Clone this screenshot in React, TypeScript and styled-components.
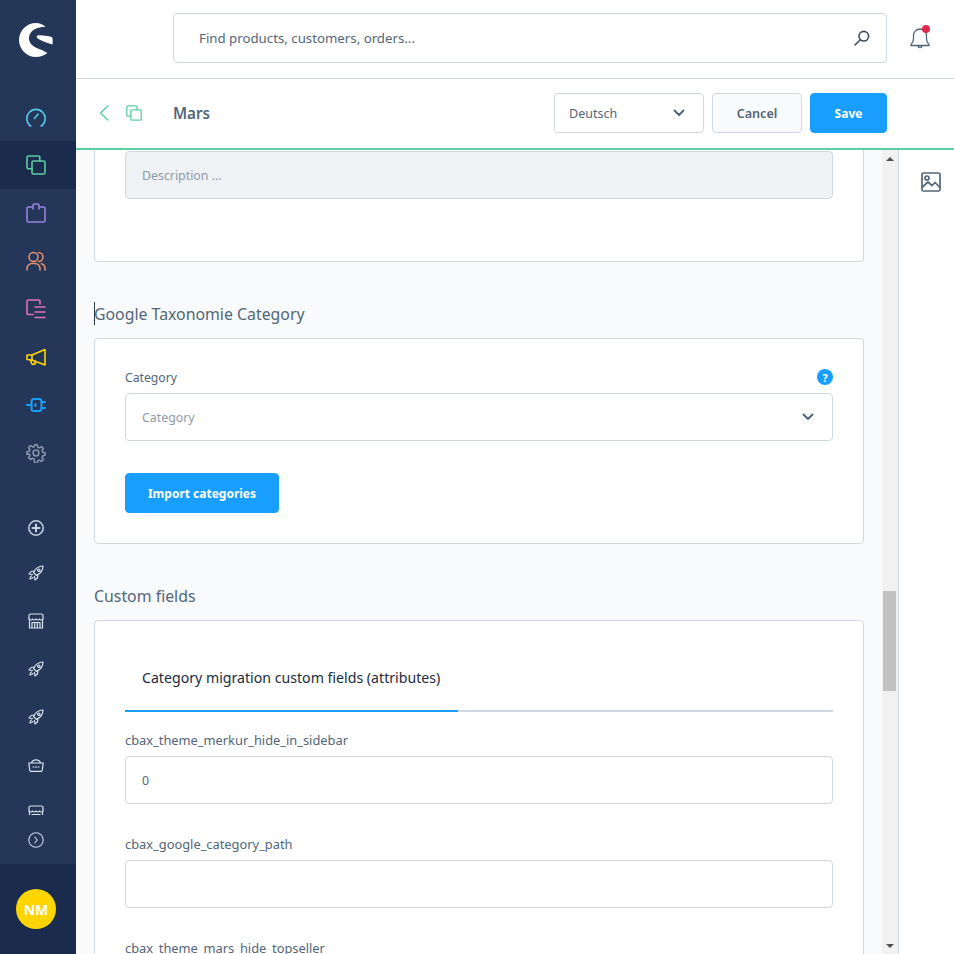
import React from "react";
import styled, { createGlobalStyle } from "styled-components";

const GlobalStyle = createGlobalStyle`
  html, body {
    margin: 0;
    height: 100%;
    overflow: hidden;
    background: #fff;
    font-family: "Noto Sans", "Open Sans", sans-serif;
    color: #52667a;
  }
  * {
    box-sizing: border-box;
  }
`;

const green = "#5bcea1";

const Shell = styled.div`
  display: flex;
  width: 954px;
  height: 954px;
  overflow: hidden;
`;

const Sidebar = styled.nav`
  width: 76px;
  flex: none;
  display: flex;
  flex-direction: column;
  background: #243758;
`;

const LogoBox = styled.div`
  height: 93px;
  display: flex;
  align-items: center;
  justify-content: center;
  padding: 0 4px 13px 0;
`;

const NavItem = styled.div<{ $active?: boolean; $height?: number }>`
  height: ${(p) => p.$height ?? 48}px;
  flex: none;
  display: flex;
  align-items: center;
  justify-content: center;
  padding-right: 4px;
  overflow: hidden;
  background: ${(p) => (p.$active ? "#1a2b4d" : "transparent")};
`;

const ClippedNavItem = styled(NavItem)`
  align-items: flex-start;
  padding-top: 16px;
`;

const NavSpacer = styled.div<{ $h: number }>`
  height: ${(p) => p.$h}px;
  flex: none;
`;

const SideFooter = styled.div`
  height: 90px;
  margin-top: auto;
  display: flex;
  align-items: center;
  justify-content: center;
  padding-right: 4px;
  background: #1a2b4d;
`;

const Avatar = styled.div`
  width: 40px;
  height: 40px;
  border-radius: 50%;
  background: #ffd500;
  color: #fff;
  font-size: 14px;
  font-weight: 700;
  display: flex;
  align-items: center;
  justify-content: center;
`;

const Workspace = styled.div`
  flex: 1;
  min-width: 0;
  display: flex;
  flex-direction: column;
`;

const SearchBar = styled.header`
  height: 79px;
  flex: none;
  display: flex;
  align-items: center;
  padding: 0 19px 3px 97px;
  border-bottom: 1px solid #d1d9e0;
  background: #fff;
`;

const SearchField = styled.div`
  width: 714px;
  height: 50px;
  display: flex;
  align-items: center;
  justify-content: space-between;
  padding: 0 16px 0 25px;
  background: #fff;
  border: 1px solid #d1d9e0;
  border-radius: 4px;
  font-size: 13.26px;
  color: #52667a;
`;

const Bell = styled.div`
  position: relative;
  margin-left: 22px;
  display: flex;
`;

const BellDot = styled.span`
  position: absolute;
  top: -2px;
  right: 1px;
  width: 8px;
  height: 8px;
  border-radius: 50%;
  background: #de294c;
`;

const SmartBar = styled.div`
  height: 71px;
  flex: none;
  display: flex;
  align-items: center;
  padding: 0 67px 2px 23px;
  background: #fff;
  border-bottom: 2px solid ${green};
`;

const Crumbs = styled.div`
  display: flex;
  align-items: center;
  gap: 17px;
  width: 74px;
`;

const PageTitle = styled.h1`
  margin: 0;
  font-size: 15.2px;
  font-weight: 600;
  color: #52667a;
  flex: 1;
`;

const LangSelect = styled.div`
  width: 150px;
  height: 40px;
  display: flex;
  align-items: center;
  justify-content: space-between;
  padding: 1px 18px 0 14px;
  border: 1px solid #d1d9e0;
  border-radius: 4px;
  font-size: 12.5px;
  color: #52667a;
`;

const Button = styled.button<{ $primary?: boolean; $width: number }>`
  width: ${(p) => p.$width}px;
  height: 40px;
  padding: 1px 0 0;
  border-radius: 4px;
  border: 1px solid ${(p) => (p.$primary ? "#189eff" : "#d1d9e0")};
  background: ${(p) => (p.$primary ? "#189eff" : "#f9fafb")};
  color: ${(p) => (p.$primary ? "#fff" : "#52667a")};
  font-family: inherit;
  font-size: ${(p) => (p.$primary ? "12px" : "12.6px")};
  font-weight: ${(p) => (p.$primary ? 700 : 600)};
`;

const CancelButton = styled(Button)`
  margin: 0 8px;
`;

const Body = styled.div`
  flex: 1;
  min-height: 0;
  display: flex;
`;

const Content = styled.main`
  width: 806px;
  flex: none;
  overflow: hidden;
  background: #f9fafb;
  padding: 0 18px;
`;

const Card = styled.section<{ $height?: number }>`
  width: 770px;
  height: ${(p) => (p.$height ? `${p.$height}px` : "auto")};
  background: #fff;
  border: 1px solid #d1d9e0;
  border-radius: 4px;
  padding: 0 30px;
`;

const ClippedCard = styled(Card)`
  margin-top: -30px;
  padding-top: 30px;
`;

const CategoryCard = styled(Card)`
  padding-top: 30px;
`;

const CardTitle = styled.h2`
  position: relative;
  margin: 0;
  height: 76px;
  display: flex;
  align-items: center;
  padding-top: 27px;
  font-size: 15.85px;
  font-weight: 400;
  color: #52667a;
`;

const Caret = styled.span`
  position: absolute;
  left: 0;
  top: 40px;
  width: 1px;
  height: 23px;
  background: #2b3a4a;
`;

const FieldHead = styled.div`
  display: flex;
  align-items: center;
  justify-content: space-between;
  height: 16px;
  font-size: 12.2px;
  color: #52667a;
`;

const CustomLabel = styled(FieldHead)`
  font-size: 12.85px;
`;

const Input = styled.div<{ $disabled?: boolean; $muted?: boolean }>`
  height: 48px;
  margin-top: 8px;
  display: flex;
  align-items: center;
  justify-content: space-between;
  padding: 0 18px 0 16px;
  border: 1px solid #d1d9e0;
  border-radius: 4px;
  background: ${(p) => (p.$disabled ? "#eff1f4" : "#fff")};
  font-size: 12.35px;
  color: ${(p) => (p.$muted ? "#8d9cab" : "#52667a")};
`;

const DescriptionInput = styled(Input)`
  margin-top: 0;
`;

const HelpDot = styled.span`
  width: 16px;
  height: 16px;
  border-radius: 50%;
  background: #189eff;
  color: #fff;
  font-size: 11px;
  font-weight: 700;
  display: flex;
  align-items: center;
  justify-content: center;
`;

const ImportButton = styled(Button)`
  display: block;
  margin-top: 32px;
`;

const Tabs = styled.div`
  display: flex;
  height: 91px;
  border-bottom: 2px solid #d1d9e0;
`;

const Tab = styled.div`
  width: 333px;
  height: 91px;
  display: flex;
  align-items: center;
  padding: 24px 0 0 17px;
  border-bottom: 2px solid #189eff;
  font-size: 14.15px;
  color: #1a2b3c;
`;

const CustomField = styled.div<{ $gap: number }>`
  margin-top: ${(p) => p.$gap}px;
`;

const ScrollBar = styled.div`
  width: 17px;
  flex: none;
  display: flex;
  flex-direction: column;
  background: #f1f1f1;
  border-right: 1px solid #d1d9e0;
`;

const ScrollArrow = styled.div<{ $down?: boolean }>`
  height: 17px;
  flex: none;
  display: flex;
  align-items: center;
  justify-content: center;
  padding-right: 1px;
  margin-top: ${(p) => (p.$down ? "auto" : "0")};
  &::before {
    content: "";
    border-left: 4px solid transparent;
    border-right: 4px solid transparent;
    ${(p) => (p.$down ? "border-top: 4px solid #505050;" : "border-bottom: 4px solid #505050;")}
  }
`;

const ScrollThumb = styled.div`
  width: 13px;
  height: 100px;
  margin: 424px 0 0 1px;
  background: #c1c1c1;
`;

const RightBar = styled.aside`
  flex: 1;
  display: flex;
  justify-content: center;
  padding: 22px 0 0 9px;
  background: #fff;
`;

const Line = {
  fill: "none",
  stroke: "currentColor",
  strokeWidth: 2,
  strokeLinecap: "round" as const,
  strokeLinejoin: "round" as const,
};

const Thin = { ...Line, strokeWidth: 1.5 };

const Logo = () => (
  <svg width="34" height="34" viewBox="0 0 34 34">
    <path
      fill="#fff"
      d="M17 0C20.5 0 24 1.5 26.5 4C22 3.5 13 5 10.5 12C8 19 14 24 20 26C23 27 26 28.5 28.5 30C25 32.5 21 34 17 34C7.6 34 0 26.4 0 17S7.6 0 17 0Z"
    />
    <path
      fill="#fff"
      d="M18.5 12.5C23 12 28 13 33 14C34 16 33.8 19 33.4 21.5C28 20 23 18 19.5 16C17.5 15 17 13 18.5 12.5Z"
    />
  </svg>
);

const Gauge = () => (
  <svg width="20" height="20" viewBox="0 0 20 20" {...Line} color="#57c8e8" strokeWidth={1.6}>
    <path d="M4 18.5A9.2 9.2 0 1 1 16 18.5" />
    <path d="M3.5 18.8h1.5M15 18.8h1.5" />
    <path d="M8.5 11.5l3.5-4.5" />
  </svg>
);

const Copies = ({ color, size = 20 }: { color: string; size?: number }) => (
  <svg width={size} height={size} viewBox="0 0 20 20" {...Line} color={color} strokeWidth={1.6}>
    <path d="M6 13.8H2.5A1.5 1.5 0 0 1 1 12.3V2.5A1.5 1.5 0 0 1 2.5 1h9.8a1.5 1.5 0 0 1 1.5 1.5V6" />
    <rect x="6" y="6" width="13" height="13" rx="1.5" />
  </svg>
);

const Bag = () => (
  <svg width="20" height="20" viewBox="0 0 20 20" {...Line} color="#9a82e0" strokeWidth={1.6}>
    <path d="M6 4H2.5A1.5 1.5 0 0 0 1 5.5v12A1.5 1.5 0 0 0 2.5 19h15a1.5 1.5 0 0 0 1.5-1.5v-12A1.5 1.5 0 0 0 17.5 4H14" />
    <path d="M7 6V2.5A1.5 1.5 0 0 1 8.5 1h3A1.5 1.5 0 0 1 13 2.5V6" />
  </svg>
);

const Users = () => (
  <svg width="20" height="20" viewBox="0 0 20 20" {...Line} color="#e8906f" strokeWidth={1.5}>
    <circle cx="7.5" cy="6" r="4.5" />
    <path d="M1 19v-1.5a5 5 0 0 1 5-5h3a5 5 0 0 1 5 5V19" />
    <path d="M12.5 1.5a4.5 4.5 0 0 1 0 9M15.5 12.8A5 5 0 0 1 19 17.5V19" />
  </svg>
);

const Pages = () => (
  <svg width="20" height="20" viewBox="0 0 20 20" {...Line} color="#e070c0" strokeWidth={1.6}>
    <path d="M7 15.5H2.5A1.5 1.5 0 0 1 1 14V2.5A1.5 1.5 0 0 1 2.5 1h10A1.5 1.5 0 0 1 14 2.5V5" />
    <path d="M9 8h10M9 13h10M9 18.5h10" />
  </svg>
);

const Megaphone = () => (
  <svg width="20" height="20" viewBox="0 0 20 20" {...Line} color="#ffd500" strokeWidth={1.6}>
    <path d="M1 8v4.5l5 .5 13 5V2.5L6 8z" />
    <path d="M6 8v5M4.5 13l1 3a2 2 0 0 0 2.5 1.2l1.5-.6-1-2.4" />
  </svg>
);

const Plug = () => (
  <svg width="20" height="20" viewBox="0 0 20 20" {...Line} color="#189eff" strokeWidth={2}>
    <rect x="5.5" y="4" width="10" height="12" rx="2.5" />
    <path d="M1 10h4.5M15.5 7H19M15.5 13H19M9.5 9v2" />
  </svg>
);

const Gear = () => (
  <svg width="20" height="20" viewBox="-1 -1 22 22" {...Line} color="#8a97a8" strokeWidth={1.7}>
    <circle cx="10" cy="10" r="3.2" />
    <path d="M8.5 1h3l.5 2.6 1.9.8 2.2-1.5 2.100 2.100-1.500 2.200.8 1.900 2.500.5v3l-2.500.5-.8 1.900 1.500 2.200-2.100 2.100-2.200-1.500-1.900.8-.5 2.400h-3L8 16.500l-1.900-.8-2.200 1.500-2.100-2.100 1.500-2.200-.8-1.900L0 11.500v-3l2.500-.5.8-1.900-1.500-2.200 2.100-2.100 2.200 1.500L8 3z" />
  </svg>
);

const PlusCircle = () => (
  <svg width="16" height="16" viewBox="0 0 16 16" {...Thin} color="#c9d4e3">
    <circle cx="8" cy="8" r="7.2" />
    <path d="M8 4.5v7M4.5 8h7" strokeWidth={2} />
  </svg>
);

const Rocket = () => (
  <svg width="16" height="16" viewBox="0 0 16 16" {...Thin} strokeWidth={1.2} color="#dbe4ee">
    <path d="M5.5 7.500C7.5 3.500 10.5 1 15 1c0 4.500-2.500 7.500-6.500 9.500z" />
    <path d="M6.500 6 3 6.500 1 9l3.500.5M10 9.500 9.500 13 7 15l-.5-3.500" />
    <circle cx="10.800" cy="5.200" r="1.200" />
    <path d="M3.500 11c-1 .5-1.500 2-1.500 3 1 0 2.500-.5 3-1.500" />
  </svg>
);

const Store = () => (
  <svg width="16" height="16" viewBox="0 0 16 16" {...Thin} strokeWidth={1.2} color="#dbe4ee">
    <path d="M1 6V2.500A1.500 1.500 0 0 1 2.500 1h11A1.500 1.500 0 0 1 15 2.500V6" />
    <path d="M1 6c1 1.300 2.500 1.300 3.500 0 1 1.300 2.500 1.300 3.500 0 1 1.300 2.500 1.300 3.500 0 1 1.300 2.500 1.300 3.500 0" />
    <path d="M1.500 7.500V15h13V7.500M4 15V9.500h8V15M6.700 9.500V15M9.300 9.500V15" />
  </svg>
);

const Basket = () => (
  <svg width="16" height="16" viewBox="0 0 16 16" {...Thin} strokeWidth={1.2} color="#dbe4ee">
    <path d="M.8 6h14.400l-1 7.500a1 1 0 0 1-1 .8H2.800a1 1 0 0 1-1-.8zM3.500 6C4 4 5.500 2.800 8 2.800S12 4 12.500 6" />
    <path d="M5 10h1M7.500 10h1M10 10h1" />
  </svg>
);

const ChevronCircle = () => (
  <svg width="16" height="16" viewBox="0 0 16 16" {...Thin} strokeWidth={1.1} color="#c9d4e3">
    <circle cx="8" cy="8" r="7.2" />
    <path d="M6.800 5 9.200 8l-2.400 3" />
  </svg>
);

const SearchIcon = () => (
  <svg width="16" height="16" viewBox="0 0 16 16" {...Thin} color="#3d4c5c" strokeWidth={1.6}>
    <circle cx="9.800" cy="6.200" r="4.800" />
    <path d="M6.300 9.700 1 15" />
  </svg>
);

const BellIcon = () => (
  <svg width="22" height="22" viewBox="0 0 22 22" {...Thin} color="#52667a" strokeWidth={1.3}>
    <path d="M2 17.500c1.500-1.500 2.500-3 2.500-6V8.500a6.500 6.500 0 0 1 13 0v3c0 3 1 4.500 2.500 6 .5.800 0 1-.5 1H2.500c-.5 0-1-.2-.5-1z" />
    <path d="M9 18.500a2 2 0 0 0 4 0" />
  </svg>
);

const Chevron = () => (
  <svg width="12" height="8" viewBox="0 0 12 8" {...Line} color="#52667a" strokeWidth={2}>
    <path d="M1.500 1.500 6 6l4.500-4.500" />
  </svg>
);

const BackIcon = () => (
  <svg width="10" height="16" viewBox="0 0 10 16" {...Thin} color={green}>
    <path d="M9 1 1.500 8 9 15" />
  </svg>
);

const ImageIcon = () => (
  <svg width="20" height="20" viewBox="0 0 20 20" {...Thin} color="#52667a" strokeWidth={1.7}>
    <rect x="1" y="1" width="18" height="18" rx="1.500" />
    <circle cx="6" cy="6" r="2" />
    <path d="M1.500 15 7 10l4 3.500L14 10.500l5 5" />
  </svg>
);

export default function App() {
  return (
    <>
      <GlobalStyle />
      <Shell>
        <Sidebar>
          <LogoBox>
            <Logo />
          </LogoBox>
          <NavItem><Gauge /></NavItem>
          <NavItem $active><Copies color={green} /></NavItem>
          <NavItem><Bag /></NavItem>
          <NavItem><Users /></NavItem>
          <NavItem><Pages /></NavItem>
          <NavItem><Megaphone /></NavItem>
          <NavItem><Plug /></NavItem>
          <NavItem><Gear /></NavItem>
          <NavSpacer $h={30} />
          <NavItem $height={42}><PlusCircle /></NavItem>
          <NavItem><Rocket /></NavItem>
          <NavItem><Store /></NavItem>
          <NavItem><Rocket /></NavItem>
          <NavItem><Rocket /></NavItem>
          <NavItem><Basket /></NavItem>
          <ClippedNavItem $height={26}><Store /></ClippedNavItem>
          <NavItem $height={49}><ChevronCircle /></NavItem>
          <SideFooter>
            <Avatar>NM</Avatar>
          </SideFooter>
        </Sidebar>
        <Workspace>
          <SearchBar>
            <SearchField>
              Find products, customers, orders...
              <SearchIcon />
            </SearchField>
            <Bell>
              <BellIcon />
              <BellDot />
            </Bell>
          </SearchBar>
          <SmartBar>
            <Crumbs>
              <BackIcon />
              <Copies color={green} size={16} />
            </Crumbs>
            <PageTitle>Mars</PageTitle>
            <LangSelect>
              Deutsch
              <Chevron />
            </LangSelect>
            <CancelButton $width={90}>Cancel</CancelButton>
            <Button $primary $width={77}>Save</Button>
          </SmartBar>
          <Body>
            <Content>
              <ClippedCard $height={142}>
                <DescriptionInput $disabled $muted>Description ...</DescriptionInput>
              </ClippedCard>
              <CardTitle>
                <Caret />
                Google Taxonomie Category
              </CardTitle>
              <CategoryCard $height={206}>
                <FieldHead>
                  Category
                  <HelpDot>?</HelpDot>
                </FieldHead>
                <Input $muted>
                  Category
                  <Chevron />
                </Input>
                <ImportButton $primary $width={154}>Import categories</ImportButton>
              </CategoryCard>
              <CardTitle>Custom fields</CardTitle>
              <Card>
                <Tabs>
                  <Tab>Category migration custom fields (attributes)</Tab>
                </Tabs>
                <CustomField $gap={20}>
                  <CustomLabel>cbax_theme_merkur_hide_in_sidebar</CustomLabel>
                  <Input>0</Input>
                </CustomField>
                <CustomField $gap={32}>
                  <CustomLabel>cbax_google_category_path</CustomLabel>
                  <Input />
                </CustomField>
                <CustomField $gap={32}>
                  <CustomLabel>cbax_theme_mars_hide_topseller</CustomLabel>
                  <Input />
                </CustomField>
              </Card>
            </Content>
            <ScrollBar>
              <ScrollArrow />
              <ScrollThumb />
              <ScrollArrow $down />
            </ScrollBar>
            <RightBar>
              <ImageIcon />
            </RightBar>
          </Body>
        </Workspace>
      </Shell>
    </>
  );
}
